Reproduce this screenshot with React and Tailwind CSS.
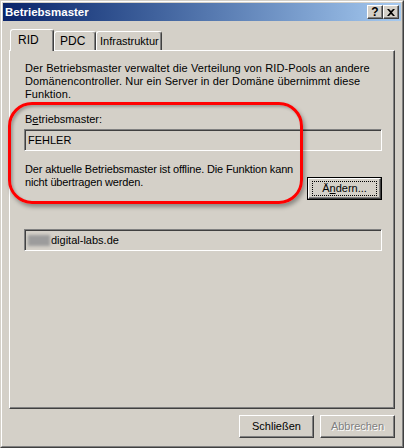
import React from 'react'

const FONT = { fontFamily: '"Liberation Sans", Arial, sans-serif' }

function TitleButton({ children }) {
  return (
    <div className="w-[16px] h-[14px] bg-[#d4d0c8] border border-t-white border-l-white border-r-[#404040] border-b-[#404040] shadow-[inset_-1px_-1px_0_#808080] flex items-center justify-center">
      {children}
    </div>
  )
}

function Sunken({ children, className = '' }) {
  return (
    <div
      className={`h-[22px] border border-t-[#808080] border-l-[#808080] border-r-white border-b-white shadow-[inset_1px_1px_0_#404040,inset_-1px_-1px_0_#d4d0c8] flex items-center pl-[3px] text-black ${className}`}
    >
      {children}
    </div>
  )
}

function Button({ children, disabled, isDefault }) {
  const inner = (
    <div
      className={`w-full h-full flex items-center justify-center border border-t-white border-l-white border-r-[#404040] border-b-[#404040] shadow-[inset_-1px_-1px_0_#808080,inset_1px_1px_0_#d4d0c8] ${
        disabled ? 'text-[#808080] [text-shadow:1px_1px_0_#fff]' : 'text-black'
      }`}
    >
      {isDefault ? (
        <div className="w-[65px] h-[15px] border border-dotted border-black flex items-center justify-center">
          {children}
        </div>
      ) : (
        children
      )}
    </div>
  )
  return isDefault ? (
    <div className="w-[75px] h-[23px] border border-black">{inner}</div>
  ) : (
    <div className="w-[75px] h-[23px]">{inner}</div>
  )
}

export default function App() {
  return (
    <div
      className="w-[404px] h-[448px] bg-[#d4d0c8] border border-t-[#d4d0c8] border-l-[#d4d0c8] border-r-[#404040] border-b-[#404040] text-[11px] leading-[13px]"
      style={FONT}
    >
      <div className="h-full border border-t-white border-l-white border-r-[#808080] border-b-[#808080] p-[1px] flex flex-col">
        {/* Title bar */}
        <div className="h-[18px] bg-gradient-to-r from-[#0a246a] to-[#a6caf0] flex items-center justify-between pl-[2px] pr-[2px]">
          <span className="text-white font-bold text-[11.5px]">Betriebsmaster</span>
          <div className="flex">
            <TitleButton>
              <span className="font-bold text-[12px] leading-none text-black">?</span>
            </TitleButton>
            <TitleButton>
              <svg width="8" height="7" viewBox="0 0 8 7">
                <path d="M0 0h2l2 2 2-2h2L5 3.5 8 7H6L4 5 2 7H0l3-3.5z" fill="#000" />
              </svg>
            </TitleButton>
          </div>
        </div>

        <div className="flex-1 px-[6px] flex flex-col">
          {/* Tabs */}
          <div className="mt-[8px] h-[21px] flex items-end pl-[1px]">
            <div className="relative z-10 w-[44px] h-[22px] -mb-[1px] bg-[#d4d0c8] border-t border-l border-r border-t-white border-l-white border-r-[#404040] rounded-t-[3px] shadow-[inset_-1px_0_0_#808080] pl-[7px] pt-[4px] text-[12px]">
              RID
            </div>
            <div className="w-[42px] h-[19px] border-t border-l border-r border-t-white border-l-white border-r-[#404040] rounded-t-[3px] shadow-[inset_-1px_0_0_#808080] pl-[5px] pt-[3px] text-[12px]">
              PDC
            </div>
            <div className="w-[66px] h-[19px] border-t border-l border-r border-t-white border-l-white border-r-[#404040] rounded-t-[3px] shadow-[inset_-1px_0_0_#808080] pl-[3px] pt-[3px]">
              Infrastruktur
            </div>
          </div>

          {/* Panel */}
          <div className="relative h-[359px] border border-t-white border-l-white border-r-[#404040] border-b-[#404040] shadow-[inset_-1px_-1px_0_#808080] pl-[14px] pr-[12px] pt-[11px]">
            <p className="pl-[1px] tracking-[0.1px]">
              Der Betriebsmaster verwaltet die Verteilung von RID-Pools an andere
              <br />
              Domänencontroller. Nur ein Server in der Domäne übernimmt diese
              <br />
              Funktion.
            </p>
            <p className="pl-[1px] mt-[12px]">
              B<span className="underline">e</span>triebsmaster:
            </p>
            <Sunken className="mt-[3px]">FEHLER</Sunken>
            <div className="mt-[12px] flex justify-between items-start">
              <p className="pl-[1px] tracking-[-0.15px]">
                Der aktuelle Betriebsmaster ist offline. Die Funktion kann
                <br />
                nicht übertragen werden.
              </p>
              <div className="mt-[14px]">
                <Button isDefault>
                  <span>
                    Ä<span className="underline">n</span>dern...
                  </span>
                </Button>
              </div>
            </div>
            <Sunken className="mt-[29px]">
              <span className="inline-block w-[22px] h-[11px] bg-[#9c9c9c] blur-[1.5px] mr-[1px]"></span>
              <span>digital-labs.de</span>
            </Sunken>

            {/* red annotation */}
            <div className="absolute left-[-2px] top-[51px] w-[295px] h-[102px] rounded-[24px] border-[3px] border-[#ff0000] shadow-[2px_3px_4px_rgba(0,0,0,0.35),inset_2px_2px_3px_rgba(0,0,0,0.25)] pointer-events-none"></div>
          </div>

          {/* Bottom buttons */}
          <div className="mt-[6px] flex justify-end gap-[6px]">
            <Button>Schließen</Button>
            <Button disabled>Abbrechen</Button>
          </div>
        </div>
      </div>
    </div>
  )
}
